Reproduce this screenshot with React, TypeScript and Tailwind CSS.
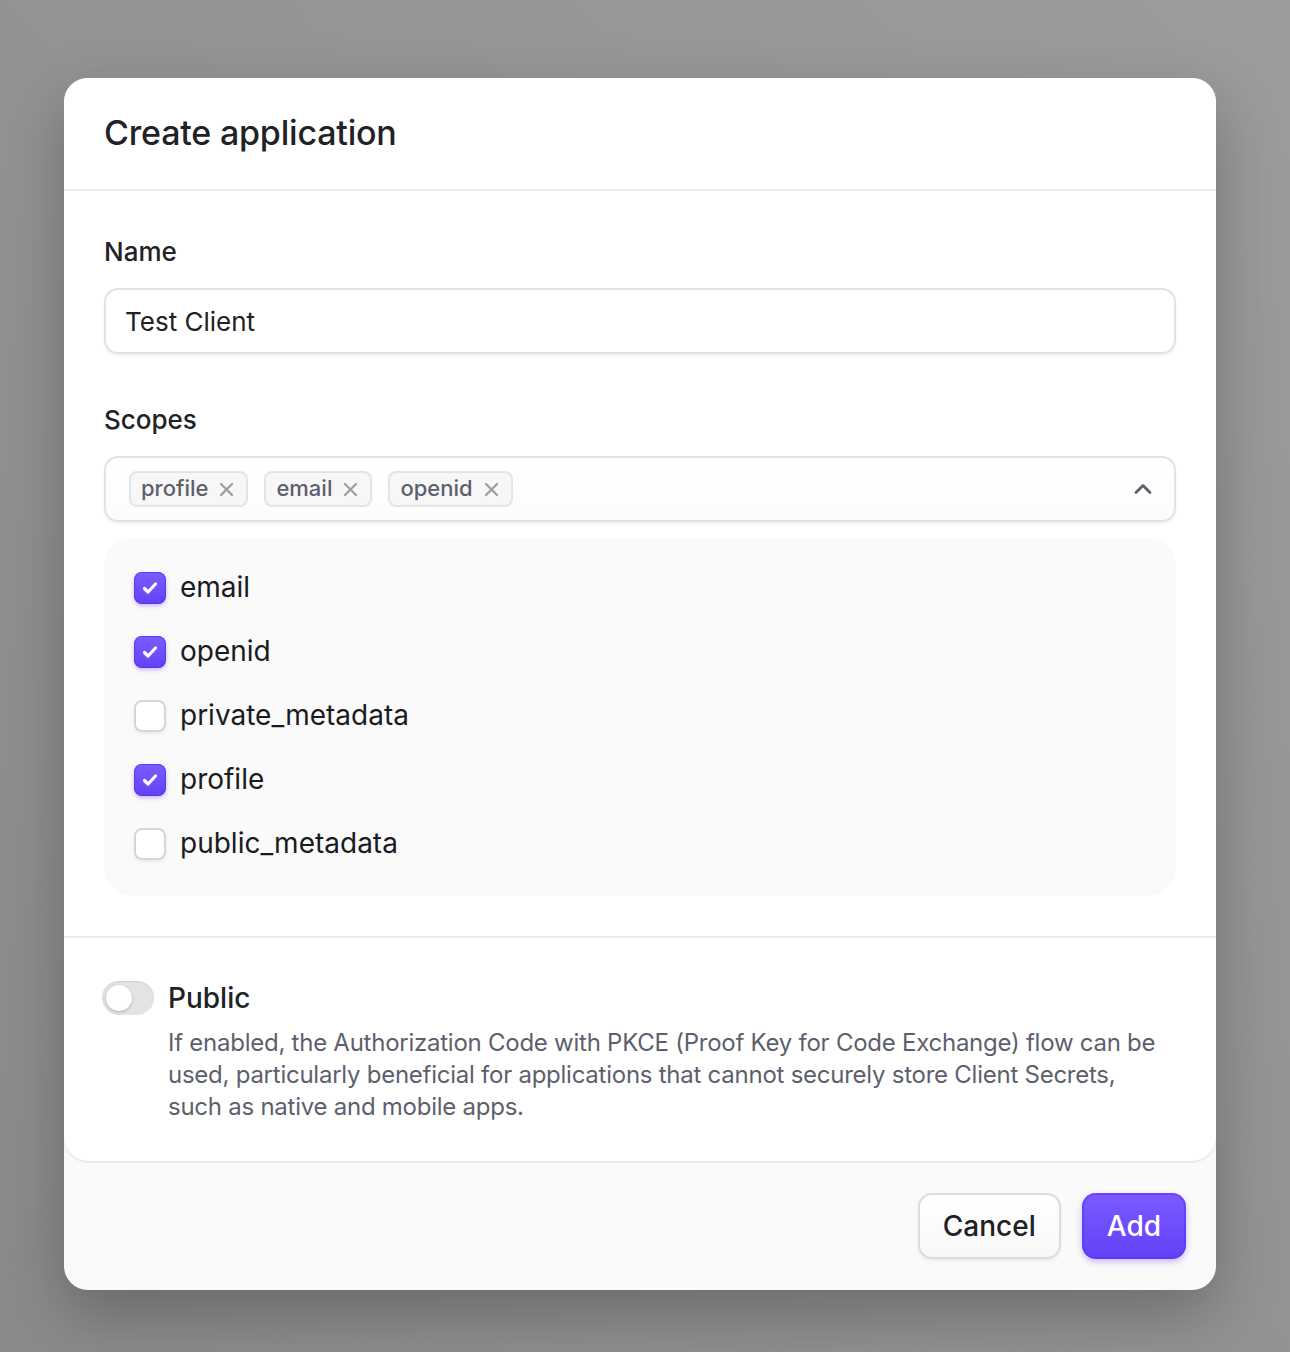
import React from 'react';

const scopes = [
  { name: 'email', checked: true },
  { name: 'openid', checked: true },
  { name: 'private_metadata', checked: false },
  { name: 'profile', checked: true },
  { name: 'public_metadata', checked: false },
];

const tags = ['profile', 'email', 'openid'];

function Check({ checked }: { checked: boolean }) {
  if (checked) {
    return (
      <div className="w-[32px] h-[32px] rounded-[8px] bg-gradient-to-b from-[#7b5cff] to-[#6440f5] shadow-[0_2px_4px_rgba(103,65,255,0.35),inset_0_0_0_1px_rgba(80,40,230,0.6)] flex items-center justify-center">
        <svg width="20" height="20" viewBox="0 0 20 20" fill="none">
          <path d="M4.5 10.5l3.5 3.5L15.5 6" stroke="white" strokeWidth={3.2} strokeLinecap="round" strokeLinejoin="round" />
        </svg>
      </div>
    );
  }
  return (
    <div className="w-[32px] h-[32px] rounded-[8px] bg-white border-2 border-[#d6d6da] shadow-[0_2px_3px_rgba(0,0,0,0.06)]" />
  );
}

export default function App() {
  return (
    <div
      className="min-h-screen bg-gradient-to-tr from-[#8a8a8a] to-[#9c9c9c] pt-[78px] px-[64px] pb-[62px]"
      style={{ fontFamily: 'Inter, "Noto Sans", sans-serif' }}
    >
      <div className="w-[1152px] rounded-[24px] bg-[#fafafa] overflow-hidden shadow-[0_24px_60px_rgba(0,0,0,0.25)]">
        {/* Card */}
        <div className="bg-white rounded-b-[24px] shadow-[0_1px_2px_rgba(0,0,0,0.12)]">
          {/* Header */}
          <div className="h-[113px] px-[40px] flex items-center border-b-2 border-[#ececee]">
            <h1 className="text-[34px] font-medium text-[#212126] tracking-[-0.2px] mt-[-2px]">Create application</h1>
          </div>

          {/* Body */}
          <div className="px-[40px] pt-[44px] pb-[40px] border-b-2 border-[#ececee]">
            <label className="block text-[26px] leading-[34px] font-medium text-[#212126]">Name</label>
            <div className="mt-[19px] h-[66px] rounded-[14px] border-2 border-[#e2e2e4] shadow-[0_2px_3px_rgba(0,0,0,0.06)] flex items-center px-[19px]">
              <span className="text-[26px] text-[#212126]">Test Client</span>
            </div>

            <label className="block mt-[49px] text-[26px] leading-[34px] font-medium text-[#212126]">Scopes</label>
            <div className="mt-[19px] h-[66px] rounded-[14px] border-2 border-[#e2e2e4] bg-gradient-to-b from-white to-[#fcfcfc] shadow-[0_2px_3px_rgba(0,0,0,0.06)] flex items-center pl-[23px] pr-[22px]">
              <div className="flex items-center gap-[16px] flex-1">
                {tags.map((t) => (
                  <div
                    key={t}
                    className="h-[36px] rounded-[8px] border-2 border-[#e4e4e7] bg-[#f7f7f8] flex items-center pl-[10px] pr-[12px] gap-[11px]"
                  >
                    <span className="text-[22px] font-medium text-[#5e5f6e] leading-none mt-[-2px]">{t}</span>
                    <svg width="15" height="15" viewBox="0 0 15 15" fill="none">
                      <path d="M2 2l11 11M13 2L2 13" stroke="#9d9da6" strokeWidth={2.3} strokeLinecap="round" />
                    </svg>
                  </div>
                ))}
              </div>
              <svg width="18" height="12" viewBox="0 0 18 12" fill="none">
                <path d="M2 9.5l7-7 7 7" stroke="#5e5f6e" strokeWidth={2.8} strokeLinecap="round" strokeLinejoin="round" />
              </svg>
            </div>

            <div className="mt-[16px] rounded-[28px] bg-[#fafafa] pt-[18px] pb-[20px] px-[30px]">
              {scopes.map((s) => (
                <div key={s.name} className="h-[64px] flex items-center gap-[14px]">
                  <Check checked={s.checked} />
                  <span className="text-[28px] text-[#1a1a1f] mt-[-2px]">{s.name}</span>
                </div>
              ))}
            </div>
          </div>

          {/* Public toggle */}
          <div className="pl-[38px] pr-[50px] pt-[42px] pb-[38px] flex gap-[14px]">
            <div className="w-[52px] h-[34px] rounded-full bg-[#e4e4e7] shadow-[inset_0_1px_2px_rgba(0,0,0,0.1)] flex items-center px-[4px] shrink-0 mt-[1px]">
              <div className="w-[26px] h-[26px] rounded-full bg-white shadow-[0_1px_3px_rgba(0,0,0,0.25)]" />
            </div>
            <div>
              <div className="text-[28px] leading-[36px] font-medium text-[#212126]">Public</div>
              <p className="mt-[11px] text-[24px] leading-[32px] text-[#5e5f6e] tracking-[-0.25px]">
                If enabled, the Authorization Code with PKCE (Proof Key for Code Exchange) flow can be used, particularly beneficial for applications that cannot securely store Client Secrets, such as native and mobile apps.
              </p>
            </div>
          </div>
        </div>

        {/* Footer */}
        <div className="h-[129px] flex items-center justify-end gap-[21px] pr-[30px]">
          <button className="h-[66px] px-[23px] rounded-[14px] border-2 border-[#dcdcdf] bg-gradient-to-b from-white to-[#f8f8f8] shadow-[0_2px_3px_rgba(0,0,0,0.06)] text-[28px] font-medium text-[#212126]">
            Cancel
          </button>
          <button className="h-[66px] px-[25px] rounded-[14px] bg-gradient-to-b from-[#7a5aff] to-[#6340f7] shadow-[0_3px_6px_rgba(103,65,255,0.35),inset_0_0_0_2px_rgba(90,50,240,0.5)] text-[28px] font-medium text-white">
            Add
          </button>
        </div>
      </div>
    </div>
  );
}
